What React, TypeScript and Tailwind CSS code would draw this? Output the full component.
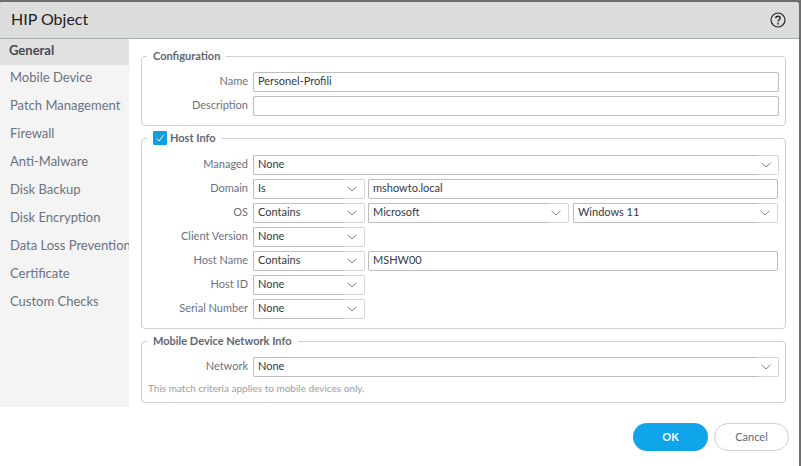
import React from "react";

const navItems = [
  "General",
  "Mobile Device",
  "Patch Management",
  "Firewall",
  "Anti-Malware",
  "Disk Backup",
  "Disk Encryption",
  "Data Loss Prevention",
  "Certificate",
  "Custom Checks",
];

const Chevron = () => (
  <svg width="10" height="6" viewBox="0 0 10 6" fill="none" stroke="#737880" strokeWidth="0.9">
    <path d="M0.5 0.8 L5 5 L9.5 0.8" />
  </svg>
);

const Input = ({ value = "", className = "" }: { value?: string; className?: string }) => (
  <div className={`h-[20px] flex items-center pl-[4px] pb-[1px] border border-[#bdbdbd] rounded-[2px] text-[11px] text-[#333a45] bg-white ${className}`}>
    {value}
  </div>
);

const Select = ({ value, className = "" }: { value: string; className?: string }) => (
  <div className={`h-[20px] flex text-[11px] text-[#333a45] bg-white ${className}`}>
    <div className="flex-1 flex items-center pl-[4px] pb-[1px] border border-r-0 border-[#bdbdbd] rounded-l-[2px]">{value}</div>
    <div className="w-[21px] flex items-center justify-end pr-[7px] border border-l-0 border-[#d6d6d6] rounded-r-[2px]">
      <Chevron />
    </div>
  </div>
);

const Row = ({ label, children }: { label: string; children: React.ReactNode }) => (
  <div className="flex items-center h-[20px]">
    <div className="w-[111px] pr-[5px] pb-[1px] text-right text-[11px] text-[#6b7280] whitespace-nowrap">{label}</div>
    <div className="flex-1 flex gap-[3px]">{children}</div>
  </div>
);

const Group = ({ legend, className = "", children }: { legend: React.ReactNode; className?: string; children: React.ReactNode }) => (
  <fieldset className={`border border-[#d0d0d0] rounded-[4px] pr-[6px] ${className}`}>
    <legend className="ml-[5px] px-[6px] text-[11px] font-bold text-[#5f6773] leading-[14px]">{legend}</legend>
    {children}
  </fieldset>
);

export default function App() {
  return (
    <div className="w-[801px] h-[466px] overflow-hidden bg-[#6e6e6e] pt-[2px] pr-[2px] font-['Lato',sans-serif]">
      <div className="h-full bg-white rounded-tr-[4px] rounded-tl-[2px]">
        {/* Title bar */}
        <div className="h-[37px] bg-[#dcdddd] border-b border-[#a9acaf] flex items-center justify-between pl-[11px] pr-[13px] rounded-t-[3px]">
          <div className="text-[16px] text-[#222] -mt-[3px]">HIP Object</div>
          <svg width="16" height="16" viewBox="0 0 16 16" fill="none" stroke="#222" className="-mt-[1px]">
            <circle cx="8" cy="8" r="7" strokeWidth="1.2" />
            <path d="M5.8 6.2 C5.8 3.6 10.2 3.6 10.2 6.2 C10.2 7.8 8 7.8 8 9.6" strokeWidth="1.4" />
            <path d="M8 10.8 V12.4" strokeWidth="1.5" />
          </svg>
        </div>

        <div className="flex h-[368px]">
          {/* Sidebar */}
          <div className="w-[129px] shrink-0 bg-[#f4f4f5] overflow-hidden">
            {navItems.map((item, i) =>
              i === 0 ? (
                <div key={item} className="h-[26px] bg-[#e1e1e1] pl-[9px] pb-[2px] flex items-center text-[13px] font-bold text-[#444b55]">
                  {item}
                </div>
              ) : (
                <div key={item} className="h-[28px] pl-[10px] pb-[2px] flex items-center text-[13px] text-[#6b7280] whitespace-nowrap">
                  {item}
                </div>
              )
            )}
          </div>

          {/* Form */}
          <div className="w-[645px] ml-[12px] pt-[10px] flex flex-col gap-[5px]">
            <Group legend="Configuration" className="h-[77px]">
              <div className="pt-[9px] flex flex-col gap-[4px]">
                <Row label="Name"><Input value="Personel-Profili" className="flex-1" /></Row>
                <Row label="Description"><Input className="flex-1" /></Row>
              </div>
            </Group>

            <Group
              legend={
                <span className="flex items-center gap-[3px]">
                  <span className="w-[14px] h-[14px] bg-[#0f9fe3] rounded-[1px] flex items-center justify-center">
                    <svg width="10" height="10" viewBox="0 0 10 10" fill="none" stroke="#fff" strokeWidth="1">
                      <path d="M1.5 5.5 L4 8 L8.8 1.8" />
                    </svg>
                  </span>
                  Host Info
                </span>
              }
              className="h-[198px]"
            >
              <div className="pt-[10px] flex flex-col gap-[4px]">
                <Row label="Managed"><Select value="None" className="flex-1" /></Row>
                <Row label="Domain">
                  <Select value="Is" className="w-[112px]" />
                  <Input value="mshowto.local" className="w-[410px]" />
                </Row>
                <Row label="OS">
                  <Select value="Contains" className="w-[112px]" />
                  <Select value="Microsoft" className="w-[201px]" />
                  <Select value="Windows 11" className="w-[205px] ml-[1px]" />
                </Row>
                <Row label="Client Version"><Select value="None" className="w-[112px]" /></Row>
                <Row label="Host Name">
                  <Select value="Contains" className="w-[112px]" />
                  <Input value="MSHW00" className="w-[410px]" />
                </Row>
                <Row label="Host ID"><Select value="None" className="w-[112px]" /></Row>
                <Row label="Serial Number"><Select value="None" className="w-[112px]" /></Row>
              </div>
            </Group>

            <Group legend="Mobile Device Network Info" className="h-[69px]">
              <div className="pt-[9px]">
                <Row label="Network"><Select value="None" className="flex-1" /></Row>
                <div className="pl-[6px] pt-[5px] text-[10px] leading-[12px] text-[#9a9ea5]">
                  This match criteria applies to mobile devices only.
                </div>
              </div>
            </Group>
          </div>
        </div>

        {/* Footer */}
        <div className="flex justify-end gap-[6px] pt-[16px] pr-[10px]">
          <button className="w-[75px] h-[28px] rounded-full bg-[#10a5eb] text-white text-[11px] font-bold">OK</button>
          <button className="w-[75px] h-[28px] rounded-full border border-[#cfcfcf] bg-white text-[#5f6773] text-[11px]">Cancel</button>
        </div>
      </div>
    </div>
  );
}
